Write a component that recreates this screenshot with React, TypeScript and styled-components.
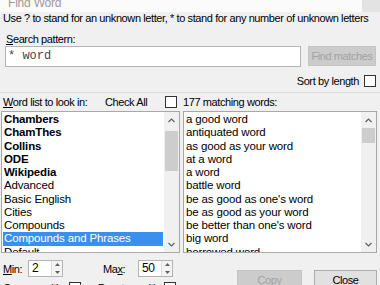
import styled, { createGlobalStyle } from 'styled-components';

const GlobalStyle = createGlobalStyle`
    html, body {
        margin: 0;
        padding: 0;
        background: #f0f0f0;
        overflow: hidden;
    }
    body {
        font-family: "Liberation Sans", Arial, sans-serif;
        font-size: 11px;
        letter-spacing: -0.4px;
        color: #000;
    }
`;

const Window = styled.div`
    display: flex;
    flex-direction: column;
    width: 380px;
    height: 285px;
    overflow: hidden;
    white-space: nowrap;
`;

const TitleBar = styled.div`
    display: flex;
    justify-content: space-between;
    align-items: flex-start;
    height: 14px;
    background: #fbfbfb;
`;

const TitleText = styled.span`
    padding-left: 8px;
    font-size: 12px;
    letter-spacing: -0.2px;
    line-height: 6.6px;
    color: #9a9a9a;
`;

const TitleButton = styled.div`
    width: 18px;
    height: 12px;
    background: #e3e3e3;
`;

const Content = styled.div`
    display: flex;
    flex-direction: column;
    padding: 0 3px 0 1px;
`;

const Hint = styled.div`
    padding-left: 2px;
    height: 13px;
    line-height: 13px;
`;

const Label = styled.div`
    margin-top: 8px;
    padding-left: 5px;
    height: 13px;
    line-height: 13px;
`;

const Key = styled.span`
    text-decoration: underline;
`;

const SearchRow = styled.div`
    display: flex;
    align-items: flex-start;
    gap: 7px;
    padding-left: 4px;
`;

const PatternInput = styled.div`
    box-sizing: border-box;
    width: 296px;
    height: 21px;
    padding: 2px 0 0 2px;
    background: #fff;
    border: 1px solid #b4b4b4;
    font-family: "Liberation Mono", monospace;
    font-size: 12px;
    letter-spacing: 0;
    line-height: 14px;
    color: #444;
    white-space: pre;
`;

const Button = styled.div<{ $disabled?: boolean; $width?: number }>`
    box-sizing: border-box;
    display: flex;
    align-items: center;
    justify-content: center;
    width: ${p => p.$width ?? 68}px;
    height: 20px;
    background: ${p => (p.$disabled ? '#cccccc' : '#e1e1e1')};
    border: 1px solid ${p => (p.$disabled ? '#c4c4c4' : '#adadad')};
    color: ${p => (p.$disabled ? '#a2a2a2' : '#000')};
`;

const SortRow = styled.div`
    display: flex;
    justify-content: flex-end;
    align-items: center;
    gap: 5px;
    height: 13px;
    margin-top: 7px;
    padding-right: 1px;
`;

const Check = styled.div`
    box-sizing: border-box;
    flex: none;
    width: 12px;
    height: 12px;
    background: #fff;
    border: 1px solid #333;
`;

const Divider = styled.div`
    height: 1px;
    margin: 5px -3px 0 -1px;
    background: #dcdcdc;
`;

const Columns = styled.div`
    display: grid;
    grid-template-columns: 179px 194px;
    column-gap: 3px;
`;

const LeftHeader = styled.div`
    display: flex;
    align-items: center;
    height: 18px;
    padding-left: 2px;
`;

const HeaderText = styled.span<{ $width: number }>`
    flex: none;
    width: ${p => p.$width}px;
`;

const RightHeader = styled.div`
    display: flex;
    align-items: center;
    height: 18px;
`;

const ListBox = styled.div`
    box-sizing: border-box;
    display: flex;
    height: 142px;
    background: #fff;
    border: 1px solid #a8a8a8;
    overflow: hidden;
`;

const Items = styled.div<{ $offset: number }>`
    flex: 1;
    display: flex;
    flex-direction: column;
    padding: ${p => p.$offset}px 1px 0 1px;
    overflow: hidden;
`;

const Item = styled.div<{ $bold?: boolean; $selected?: boolean }>`
    flex: none;
    height: 13.25px;
    line-height: 13.25px;
    padding-left: 1px;
    font-size: 11.5px;
    letter-spacing: -0.15px;
    font-weight: ${p => (p.$bold ? 700 : 400)};
    background: ${p => (p.$selected ? '#3b8fee' : 'transparent')};
    color: ${p => (p.$selected ? '#fff' : '#000')};
`;

const ScrollBar = styled.div`
    display: flex;
    flex-direction: column;
    flex: none;
    width: 15px;
    background: #f0f0f0;
`;

const Arrow = styled.div`
    display: flex;
    align-items: center;
    justify-content: center;
    height: 16px;
`;

const Track = styled.div<{ $before: number; $thumb: number }>`
    flex: 1;
    display: flex;
    flex-direction: column;
    padding-top: ${p => p.$before}px;

    &::before {
        content: '';
        display: block;
        height: ${p => p.$thumb}px;
        margin: 0 1px;
        background: #cdcdcd;
    }
`;

const Bottom = styled.div`
    display: flex;
    justify-content: space-between;
    margin-top: 7px;
    padding-left: 2px;
`;

const Options = styled.div`
    display: flex;
    flex-direction: column;
    gap: 4px;
`;

const SpinRow = styled.div`
    display: flex;
    align-items: center;
`;

const SpinLabel = styled.span<{ $width: number; $gap?: number }>`
    width: ${p => p.$width}px;
    margin-left: ${p => p.$gap ?? 0}px;
`;

const Spin = styled.div`
    box-sizing: border-box;
    display: flex;
    width: 35px;
    height: 17px;
    background: #fff;
    border: 1px solid #b4b4b4;
`;

const SpinValue = styled.span`
    flex: 1;
    padding-left: 3px;
    font-size: 12px;
    line-height: 14px;
`;

const SpinButtons = styled.div`
    display: flex;
    flex-direction: column;
    width: 10px;
    border-left: 1px solid #dcdcdc;
    background: #f4f4f4;
`;

const SpinHalf = styled.div`
    flex: 1;
    display: flex;
    align-items: center;
    justify-content: center;
`;

const ToggleRow = styled.div`
    display: flex;
    align-items: center;
    height: 13px;
`;

const Toggle = styled.span<{ $label: number; $width: number }>`
    display: flex;
    align-items: center;
    width: ${p => p.$width}px;

    & > span {
        width: ${p => p.$label}px;
    }
`;

const Actions = styled.div`
    display: flex;
    gap: 12px;
    padding-top: 10px;
`;

const Chevron = ({ up }: { up?: boolean }) => (
    <svg width="7" height="5" viewBox="0 0 7 5">
        <path
            d={up ? 'M0.5 4 L3.5 1 L6.5 4' : 'M0.5 1 L3.5 4 L6.5 1'}
            fill="none"
            stroke="#606060"
            strokeWidth="1.2"
        />
    </svg>
);

const Tiny = ({ up }: { up?: boolean }) => (
    <svg width="5" height="3" viewBox="0 0 5 3">
        <path d={up ? 'M0 3 L2.5 0 L5 3 Z' : 'M0 0 L2.5 3 L5 0 Z'} fill="#606060" />
    </svg>
);

const lists = [
    { name: 'Chambers', bold: true },
    { name: 'ChamThes', bold: true },
    { name: 'Collins', bold: true },
    { name: 'ODE', bold: true },
    { name: 'Wikipedia', bold: true },
    { name: 'Advanced' },
    { name: 'Basic English' },
    { name: 'Cities' },
    { name: 'Compounds' },
    { name: 'Compounds and Phrases', selected: true },
    { name: 'Default' },
];

const matches = [
    'a good word',
    'antiquated word',
    'as good as your word',
    'at a word',
    'a word',
    'battle word',
    "be as good as one's word",
    'be as good as your word',
    "be better than one's word",
    'big word',
    'borrowed word',
];

const App = () => {
    return (
        <Window>
            <GlobalStyle />
            <TitleBar>
                <TitleText>Find Word</TitleText>
                <TitleButton />
            </TitleBar>

            <Content>
                <Hint>Use ? to stand for an unknown letter, * to stand for any number of unknown letters</Hint>

                <Label><Key>S</Key>earch pattern:</Label>
                <SearchRow>
                    <PatternInput>* word</PatternInput>
                    <Button $disabled>Find matches</Button>
                </SearchRow>

                <SortRow>
                    Sort by length
                    <Check />
                </SortRow>
                <Divider />

                <Columns>
                    <LeftHeader>
                        <HeaderText $width={102}><Key>W</Key>ord list to look in:</HeaderText>
                        <HeaderText $width={60}>Check All</HeaderText>
                        <Check />
                    </LeftHeader>
                    <RightHeader>177 matching words:</RightHeader>

                    <ListBox>
                        <Items $offset={1}>
                            {lists.map(l => (
                                <Item key={l.name} $bold={l.bold} $selected={l.selected}>{l.name}</Item>
                            ))}
                        </Items>
                        <ScrollBar>
                            <Arrow><Chevron up /></Arrow>
                            <Track $before={3} $thumb={40} />
                            <Arrow><Chevron /></Arrow>
                        </ScrollBar>
                    </ListBox>

                    <ListBox>
                        <Items $offset={1}>
                            {matches.map(m => (
                                <Item key={m}>{m}</Item>
                            ))}
                        </Items>
                        <ScrollBar>
                            <Arrow><Chevron up /></Arrow>
                            <Track $before={0} $thumb={15} />
                            <Arrow><Chevron /></Arrow>
                        </ScrollBar>
                    </ListBox>
                </Columns>

                <Bottom>
                    <Options>
                        <SpinRow>
                            <SpinLabel $width={25}><Key>M</Key>in:</SpinLabel>
                            <Spin>
                                <SpinValue>2</SpinValue>
                                <SpinButtons>
                                    <SpinHalf><Tiny up /></SpinHalf>
                                    <SpinHalf><Tiny /></SpinHalf>
                                </SpinButtons>
                            </Spin>
                            <SpinLabel $width={35} $gap={40}>Ma<Key>x</Key>:</SpinLabel>
                            <Spin>
                                <SpinValue>50</SpinValue>
                                <SpinButtons>
                                    <SpinHalf><Tiny up /></SpinHalf>
                                    <SpinHalf><Tiny /></SpinHalf>
                                </SpinButtons>
                            </Spin>
                        </SpinRow>
                        <ToggleRow>
                            <Toggle $width={95} $label={66}><span>Case sensitive</span><Check /></Toggle>
                            <Toggle $width={90} $label={66}><span>Punct sensitive</span><Check /></Toggle>
                        </ToggleRow>
                    </Options>
                    <Actions>
                        <Button $disabled $width={65}>Copy</Button>
                        <Button $width={63}>Close</Button>
                    </Actions>
                </Bottom>
            </Content>
        </Window>
    );
};

export default App;
